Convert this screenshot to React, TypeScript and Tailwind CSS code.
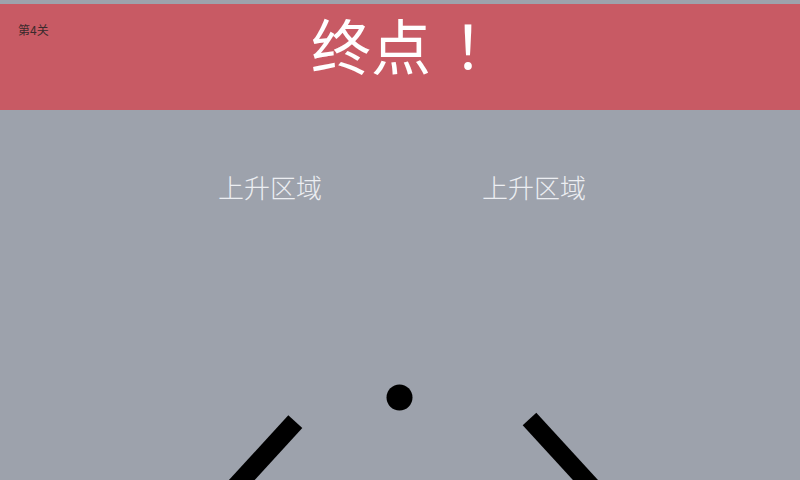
const cjk = { fontFamily: '"Noto Sans CJK SC", "Noto Sans", sans-serif' };

export default function App() {
  return (
    <div className="w-[800px] h-[480px] overflow-hidden bg-[#9da2ac] pt-[4px] flex flex-col" style={cjk}>
      <header className="relative h-[106px] bg-[#c85a64] flex justify-center pt-[10px]">
        <span className="absolute left-[18px] top-[20px] text-[12px] leading-none text-[#3a2a2c]">第4关</span>
        <h1 className="text-[60px] leading-none text-white font-normal pl-[2px]">
          终点<span className="inline-block w-[60px] pl-[22px]">！</span>
        </h1>
      </header>

      <main className="relative flex-1">
        <span className="absolute left-[218px] top-[64px] text-[26px] leading-none font-light text-[#eceef2]">上升区域</span>
        <span className="absolute left-[482px] top-[64px] text-[26px] leading-none font-light text-[#eceef2]">上升区域</span>

        <svg className="absolute inset-0" width="800" height="370" viewBox="0 110 800 370">
          <line x1="295.3" y1="421.7" x2="227.7" y2="495.4" stroke="#000" strokeWidth="19" />
          <line x1="529.5" y1="419" x2="597.1" y2="492.7" stroke="#000" strokeWidth="18.5" />
          <circle cx="399.5" cy="397.5" r="13" fill="#000" />
        </svg>
      </main>
    </div>
  );
}
